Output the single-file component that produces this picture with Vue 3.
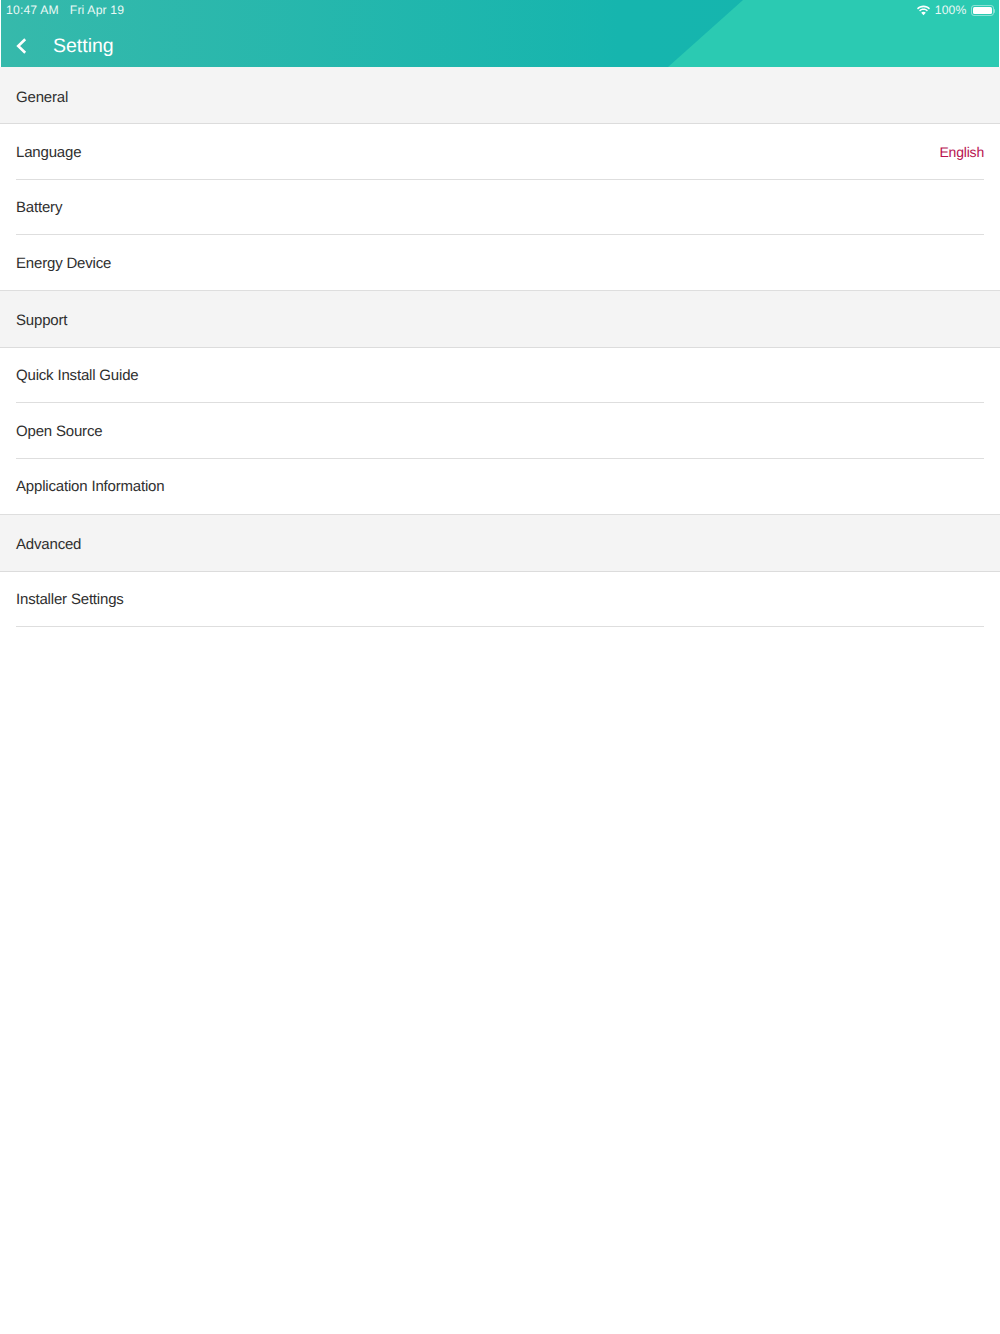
<script setup>
const groups = [
  { title: 'General', rows: [{ label: 'Language', value: 'English' }, { label: 'Battery' }, { label: 'Energy Device' }] },
  { title: 'Support', rows: [{ label: 'Quick Install Guide' }, { label: 'Open Source' }, { label: 'Application Information' }] },
  { title: 'Advanced', rows: [{ label: 'Installer Settings' }] },
]
</script>

<template>
  <div class="page">
    <header class="header">
      <div class="facet"></div>
      <div class="status">
        <div class="status-left"><span>10:47 AM</span><span>Fri Apr 19</span></div>
        <div class="status-right">
          <svg class="wifi" width="15" height="11" viewBox="0 0 15 11">
            <path d="M7.5 2.2c2.1 0 4 .8 5.5 2.2l1-1.1C12.300 1.600 10 .6 7.500.6S2.700 1.600 1 3.300l1 1.100c1.500-1.400 3.400-2.200 5.500-2.200z" fill="#fff"/>
            <path d="M7.500 5.100c1.300 0 2.500.5 3.400 1.400l1-1.100C10.700 4.200 9.200 3.600 7.500 3.600s-3.200.6-4.400 1.800l1 1.100c.9-.9 2.100-1.400 3.400-1.400z" fill="#fff"/>
            <path d="M7.500 6.800c-.9 0-1.700.3-2.300.9l2.300 2.600 2.300-2.600c-.6-.6-1.400-.9-2.300-.9z" fill="#fff"/>
          </svg>
          <span>100%</span>
          <div class="battery"><div class="battery-fill"></div></div>
          <div class="battery-cap"></div>
        </div>
      </div>
      <div class="nav">
        <svg class="back" width="11" height="16" viewBox="0 0 11 16">
          <path d="M9.200 1.200 2.200 8l7 6.800" fill="none" stroke="#fff" stroke-width="2.600"/>
        </svg>
        <span class="title">Setting</span>
      </div>
    </header>
    <main>
      <section v-for="group in groups" :key="group.title">
        <div class="group-title">{{ group.title }}</div>
        <div class="row-wrap" v-for="row in group.rows" :key="row.label">
          <div class="row">
            <span>{{ row.label }}</span>
            <span v-if="row.value" class="value">{{ row.value }}</span>
          </div>
        </div>
      </section>
    </main>
  </div>
</template>

<style>
html, body { margin: 0; background: #fff; }
</style>

<style scoped>
.page {
  width: 1000px;
  min-height: 1334px;
  background: #fff;
  font-family: "Liberation Sans", Arial, sans-serif;
  text-rendering: geometricPrecision;
  color: #2f2f2f;
}
.header {
  position: relative;
  height: 67px;
  margin: 0 1px;
  overflow: hidden;
  color: #fff;
  background: linear-gradient(90deg, #36b9ab 0%, #16b5ae 62%, #15b5ae 100%);
}
.facet {
  position: absolute;
  inset: 0;
  background: #2bcab2;
  clip-path: polygon(742px 0, 100% 0, 100% 100%, 667px 100%);
}
.status {
  position: relative;
  height: 20px;
  display: flex;
  justify-content: space-between;
  align-items: center;
  padding: 0 4px 0 5px;
  font-size: 12.200px;
  letter-spacing: 0.16px;
  color: #e9f8f5;
}
.status-left { display: flex; gap: 11px; }
.status-right { display: flex; align-items: center; }
.wifi { margin-right: 4px; }
.battery {
  box-sizing: border-box;
  width: 23px;
  height: 11px;
  margin: 1px 0 0 4px;
  padding: 1px;
  border: 1px solid rgba(255, 255, 255, 0.45);
  border-radius: 3px;
}
.battery-fill { height: 100%; background: #fff; border-radius: 1.500px; }
.battery-cap {
  width: 1.500px;
  height: 4px;
  margin-top: 1px;
  background: rgba(255, 255, 255, 0.45);
  border-radius: 0 1px 1px 0;
}
.nav {
  position: relative;
  height: 47px;
  display: flex;
  align-items: center;
  padding-left: 15px;
  box-sizing: border-box;
  padding-top: 5px;
}
.title { margin-left: 26px; font-size: 19.500px; color: #fff; }
.group-title {
  box-sizing: border-box;
  height: 57px;
  display: flex;
  align-items: center;
  padding: 3px 0 0 16px;
  font-size: 15px;
  letter-spacing: -0.18px;
  background: #f4f4f4;
  border-bottom: 1px solid #dcdcdc;
}
section:first-child .group-title { padding-top: 5px; }
.row-wrap { padding: 0 16px; }
.row {
  box-sizing: border-box;
  height: 55.600px;
  display: flex;
  align-items: center;
  justify-content: space-between;
  padding-top: 1px;
  font-size: 15px;
  letter-spacing: -0.18px;
  border-bottom: 1px solid #dedede;
}
section:first-child .row { padding-top: 2px; }
section:not(:last-child) .row-wrap:last-child { padding: 0; }
section:not(:last-child) .row-wrap:last-child .row { padding-left: 16px; padding-right: 16px; }
.value { color: #b8134f; font-size: 14px; letter-spacing: -0.2px; }
</style>
